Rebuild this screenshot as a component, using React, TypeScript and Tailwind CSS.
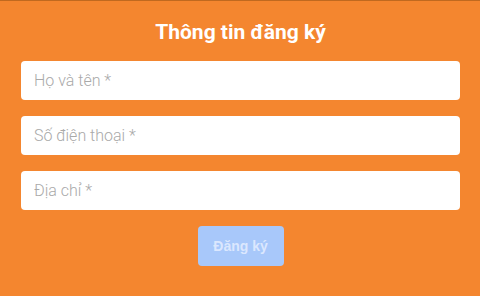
import React from 'react';

export default function App() {
  return (
    <main
      className="h-[296px] w-[480px] bg-[#f4862f] pl-[21px] pr-[20px] pt-[17px] border-t border-[#c0691f]"
      style={{ fontFamily: 'Roboto, "Noto Sans", sans-serif' }}
    >
      <h1 className="text-center text-[21px] font-bold leading-[29px] text-white">Thông tin đăng ký</h1>
      <form className="mt-[14px] flex flex-col gap-4">
        <input
          placeholder="Họ và tên *"
          className="h-[39px] w-full rounded bg-white px-[13px] text-[16px] font-light text-gray-700 placeholder:text-[#a9a9a9] outline-none"
        />
        <input
          placeholder="Số điện thoại *"
          className="h-[39px] w-full rounded bg-white px-[13px] text-[16px] font-light text-gray-700 placeholder:text-[#a9a9a9] outline-none"
        />
        <input
          placeholder="Địa chỉ *"
          className="h-[39px] w-full rounded bg-white px-[13px] text-[16px] font-light text-gray-700 placeholder:text-[#a9a9a9] outline-none"
        />
        <div className="flex justify-center">
          <button
            type="button"
            className="h-[40px] w-[86px] rounded bg-[#a8c8fa] text-[14px] font-bold text-[#dbe7fe]"
            style={{ fontFamily: '"Liberation Sans", Arial, sans-serif' }}
          >
            Đăng ký
          </button>
        </div>
      </form>
    </main>
  );
}
